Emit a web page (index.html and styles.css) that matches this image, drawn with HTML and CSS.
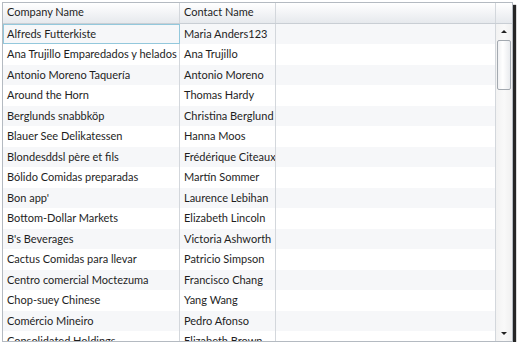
FILE: index.html
```html
<!DOCTYPE html>
<html>
<head>
<meta charset="utf-8">
<link rel="stylesheet" href="styles.css">
</head>
<body>
<div class="frame">
  <div class="grid">
    <div class="header">
      <div class="hcell c1">Company Name</div>
      <div class="hcell c2">Contact Name</div>
      <div class="hcell c3"></div>
      <div class="hcell cs"></div>
    </div>
    <div class="body">
      <div class="rows">
        <div class="row odd selected"><div class="cell c1">Alfreds Futterkiste</div><div class="cell c2">Maria Anders123</div><div class="cell c3"></div></div>
        <div class="row"><div class="cell c1">Ana Trujillo Emparedados y helados</div><div class="cell c2">Ana Trujillo</div><div class="cell c3"></div></div>
        <div class="row odd"><div class="cell c1">Antonio Moreno Taquería</div><div class="cell c2">Antonio Moreno</div><div class="cell c3"></div></div>
        <div class="row"><div class="cell c1">Around the Horn</div><div class="cell c2">Thomas Hardy</div><div class="cell c3"></div></div>
        <div class="row odd"><div class="cell c1">Berglunds snabbköp</div><div class="cell c2">Christina Berglund</div><div class="cell c3"></div></div>
        <div class="row"><div class="cell c1">Blauer See Delikatessen</div><div class="cell c2">Hanna Moos</div><div class="cell c3"></div></div>
        <div class="row odd"><div class="cell c1">Blondesddsl père et fils</div><div class="cell c2">Frédérique Citeaux</div><div class="cell c3"></div></div>
        <div class="row"><div class="cell c1">Bólido Comidas preparadas</div><div class="cell c2">Martín Sommer</div><div class="cell c3"></div></div>
        <div class="row odd"><div class="cell c1">Bon app'</div><div class="cell c2">Laurence Lebihan</div><div class="cell c3"></div></div>
        <div class="row"><div class="cell c1">Bottom-Dollar Markets</div><div class="cell c2">Elizabeth Lincoln</div><div class="cell c3"></div></div>
        <div class="row odd"><div class="cell c1">B's Beverages</div><div class="cell c2">Victoria Ashworth</div><div class="cell c3"></div></div>
        <div class="row"><div class="cell c1">Cactus Comidas para llevar</div><div class="cell c2">Patricio Simpson</div><div class="cell c3"></div></div>
        <div class="row odd"><div class="cell c1">Centro comercial Moctezuma</div><div class="cell c2">Francisco Chang</div><div class="cell c3"></div></div>
        <div class="row"><div class="cell c1">Chop-suey Chinese</div><div class="cell c2">Yang Wang</div><div class="cell c3"></div></div>
        <div class="row odd"><div class="cell c1">Comércio Mineiro</div><div class="cell c2">Pedro Afonso</div><div class="cell c3"></div></div>
        <div class="row"><div class="cell c1">Consolidated Holdings</div><div class="cell c2">Elizabeth Brown</div><div class="cell c3"></div></div>
      </div>
      <div class="scrollbar">
        <div class="arrow up"></div>
        <div class="track"><div class="thumb"></div></div>
        <div class="arrow down"></div>
      </div>
    </div>
  </div>
</div>
</body>
</html>
```

FILE: styles.css
```css
html, body {
  margin: 0;
  padding: 0;
  background: #ffffff;
}
.frame {
  padding: 2px 0 0 2px;
}
.grid {
  width: 509px;
  height: 338px;
  border: 1px solid #b4bac1;
  box-shadow: 3px 3px 1px rgba(0, 0, 0, 0.85);
  display: flex;
  flex-direction: column;
  overflow: hidden;
  font-family: Lato, "Noto Sans", sans-serif;
  font-size: 11px;
  color: #1e1e1e;
  background: #fff;
}
.header {
  display: flex;
  height: 20px;
  flex: none;
  background: linear-gradient(#ffffff 0%, #f4f5f7 45%, #e6e9ed 100%);
  border-bottom: 1px solid #c9ced4;
}
.hcell {
  box-sizing: border-box;
  border-right: 1px solid #d3d7dc;
  padding-left: 4px;
  line-height: 18px;
  white-space: nowrap;
}
.c1 { width: 177px; flex: none; }
.c2 { width: 96px; flex: none; }
.c3 { flex: 1; }
.cs { width: 16px; flex: none; border-right: none; }
.body {
  flex: 1;
  display: flex;
  min-height: 0;
}
.rows {
  flex: 1;
  overflow: hidden;
}
.row {
  display: flex;
  height: 20.47px;
  background: #ffffff;
}
.row.odd {
  background: #f6f7f9;
}
.cell {
  box-sizing: border-box;
  border-right: 1px solid #d3d7dc;
  padding-left: 4px;
  line-height: 19px;
  white-space: nowrap;
  overflow: hidden;
}
.row.selected .c1 {
  border: 1px solid #93c8dc;
  padding-left: 3px;
  line-height: 18px;
}
.scrollbar {
  width: 16px;
  flex: none;
  display: flex;
  flex-direction: column;
  background: linear-gradient(90deg, #f2f2f2, #f9f9f9 50%, #f0f0f0);
}
.arrow {
  height: 16px;
  flex: none;
  position: relative;
}
.arrow::after {
  content: "";
  position: absolute;
  left: 5px;
  width: 0;
  height: 0;
  border-left: 3px solid transparent;
  border-right: 3px solid transparent;
}
.arrow.up::after {
  top: 6px;
  border-bottom: 3px solid #222;
}
.arrow.down::after {
  top: 7px;
  border-top: 3px solid #222;
}
.track {
  flex: 1;
  padding: 0 1px;
}
.thumb {
  height: 48px;
  border: 1px solid #a3a9b0;
  border-radius: 2px;
  background: linear-gradient(90deg, #f0f1f3, #ffffff 40%, #e9ebee);
}
```
